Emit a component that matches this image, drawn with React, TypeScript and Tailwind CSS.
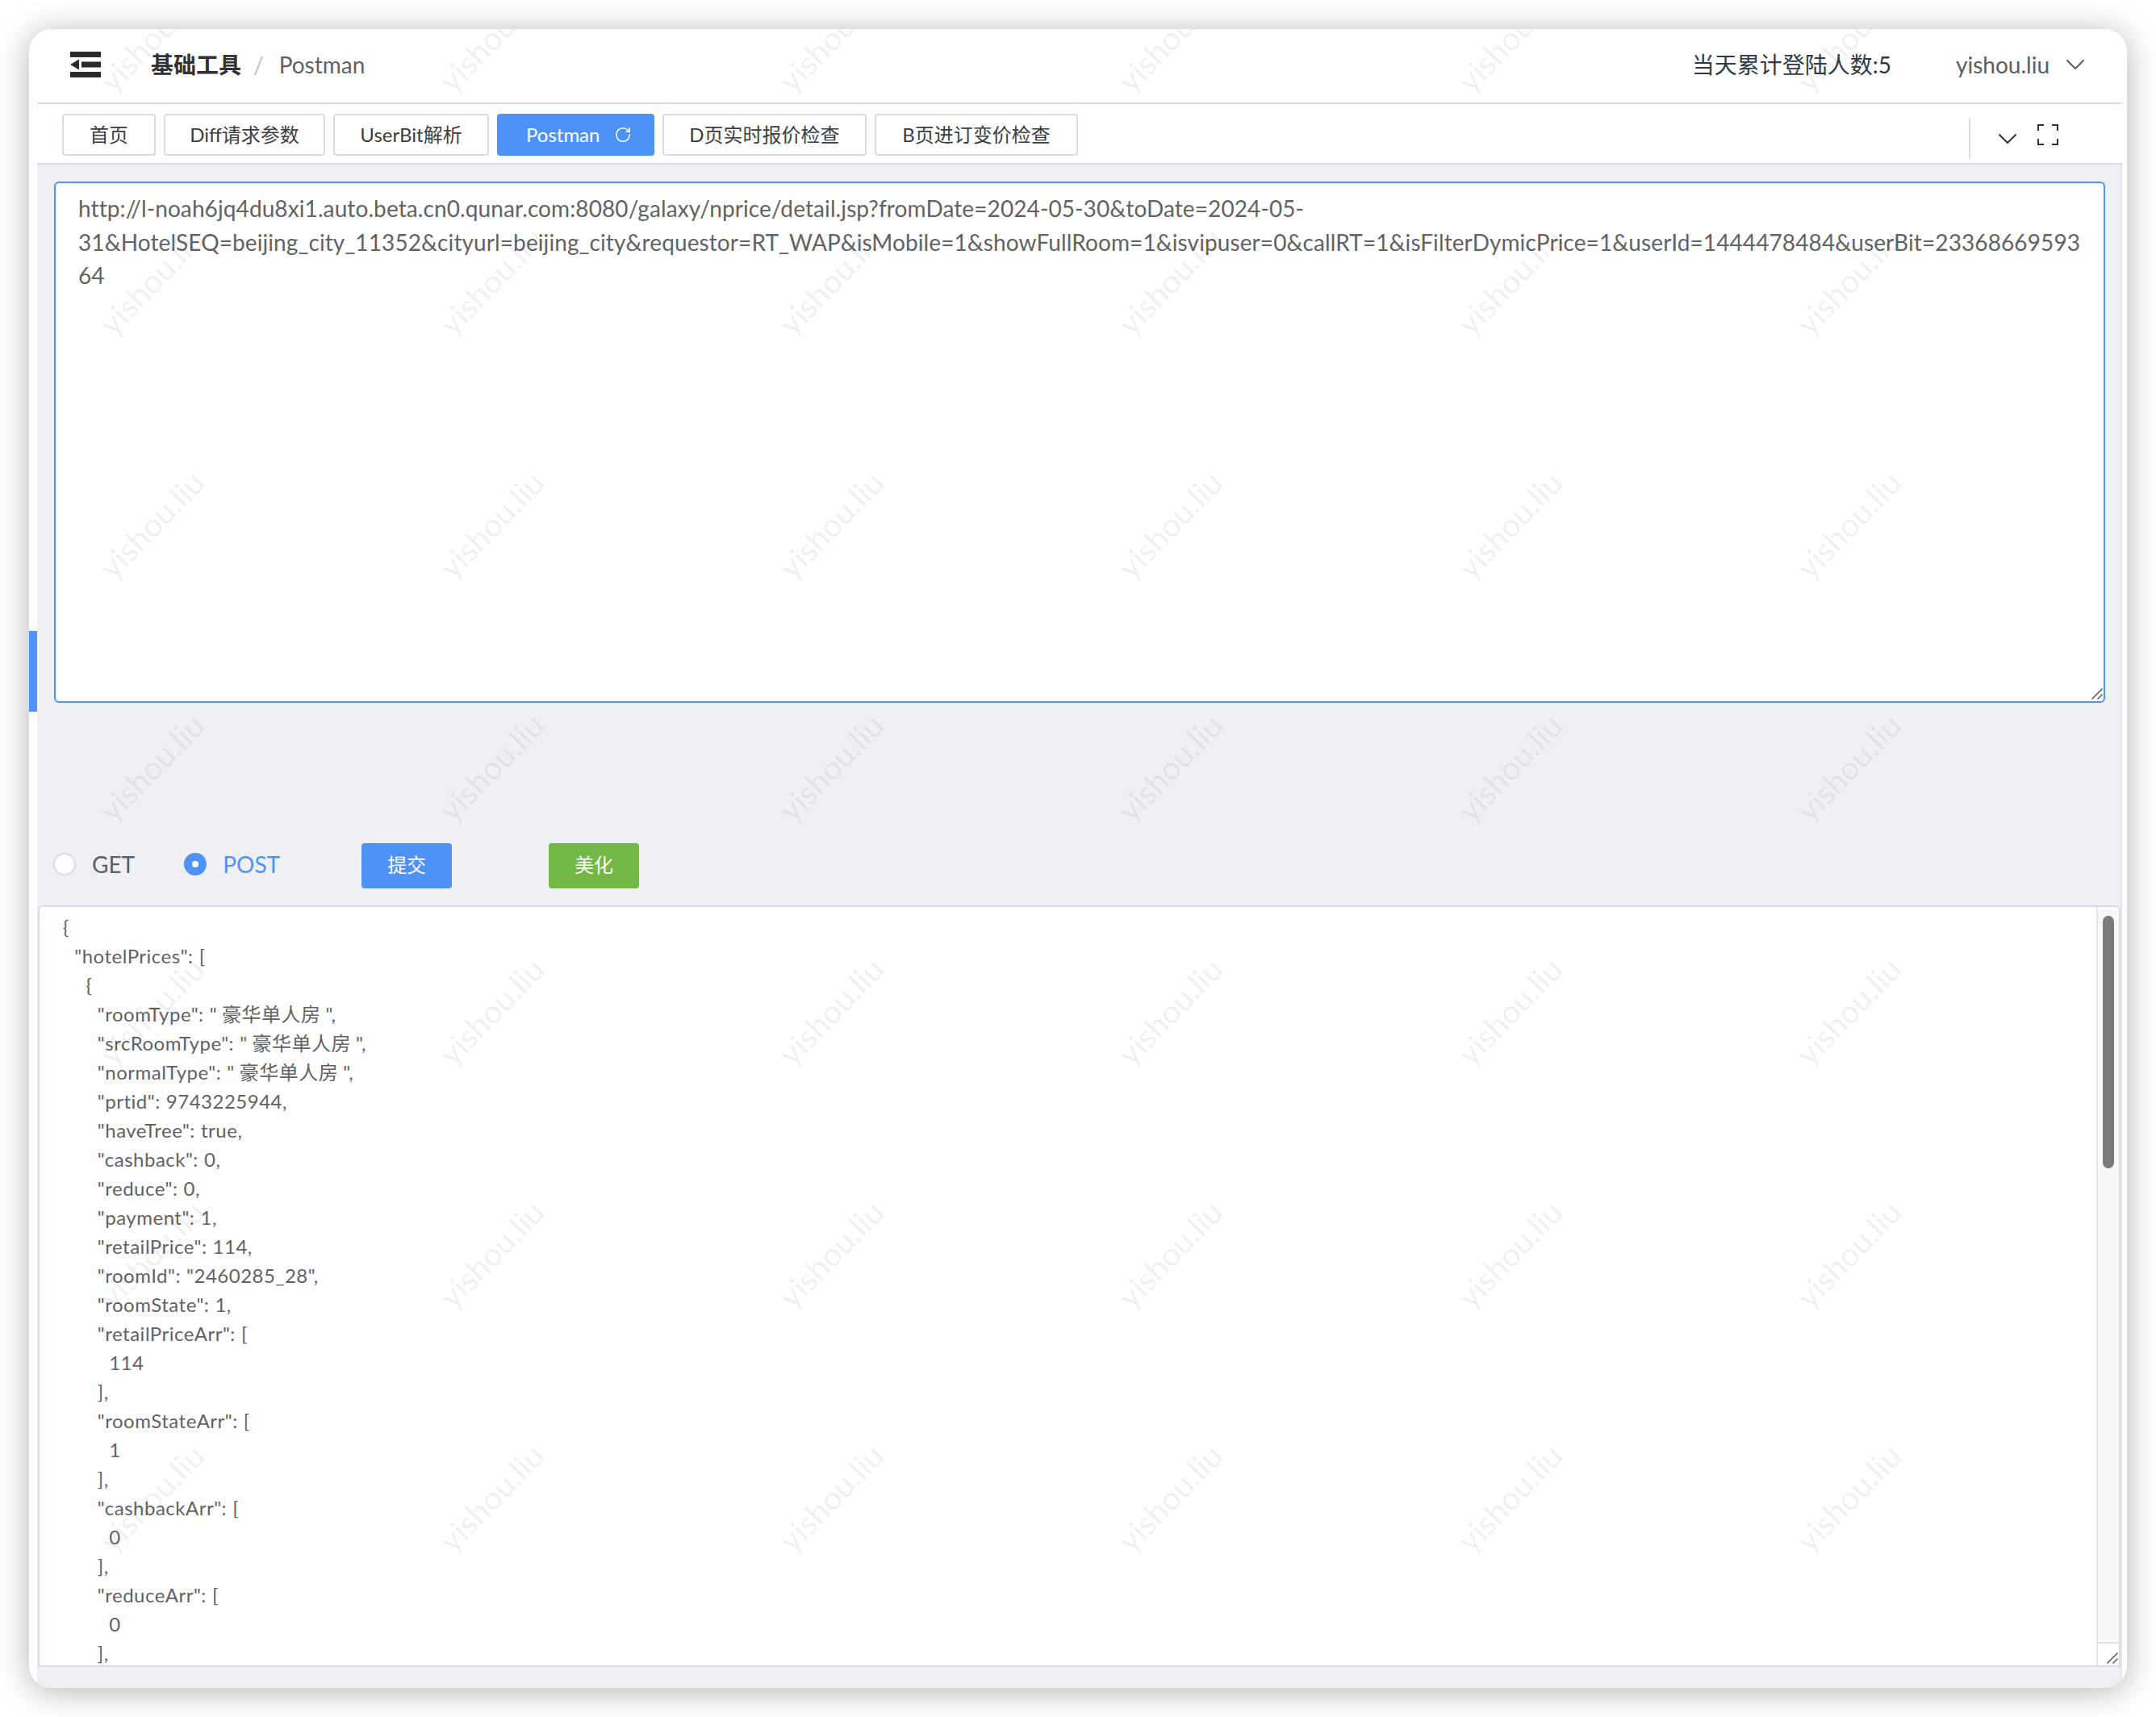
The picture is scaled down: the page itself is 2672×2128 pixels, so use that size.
import { Fragment } from 'react';
import { ChevronDown, RotateCw } from 'lucide-react';

const FONT = '[font-family:Lato,"Noto_Sans_CJK_SC",sans-serif]';
const ROOM = '豪华单人房';

const tabs = [
  { name: '首页', width: 'w-[116px]' },
  { name: 'Diff请求参数', width: 'w-[200px]' },
  { name: 'UserBit解析', width: 'w-[193px]' },
  { name: 'Postman', width: 'w-[195px]' },
  { name: 'D页实时报价检查', width: 'w-[253px]' },
  { name: 'B页进订变价检查', width: 'w-[252px]' },
];

const urlLines = [
  'http://l-noah6jq4du8xi1.auto.beta.cn0.qunar.com:8080/galaxy/nprice/detail.jsp?fromDate=2024-05-30&toDate=2024-05-',
  '31&HotelSEQ=beijing_city_11352&cityurl=beijing_city&requestor=RT_WAP&isMobile=1&showFullRoom=1&isvipuser=0&callRT=1&isFilterDymicPrice=1&userId=1444478484&userBit=23368669593',
  '64',
];

const jsonLines = [
  '{',
  '  "hotelPrices": [',
  '    {',
  '      "roomType": "豪华单人房",',
  '      "srcRoomType": "豪华单人房",',
  '      "normalType": "豪华单人房",',
  '      "prtid": 9743225944,',
  '      "haveTree": true,',
  '      "cashback": 0,',
  '      "reduce": 0,',
  '      "payment": 1,',
  '      "retailPrice": 114,',
  '      "roomId": "2460285_28",',
  '      "roomState": 1,',
  '      "retailPriceArr": [',
  '        114',
  '      ],',
  '      "roomStateArr": [',
  '        1',
  '      ],',
  '      "cashbackArr": [',
  '        0',
  '      ],',
  '      "reduceArr": [',
  '        0',
  '      ],',
];

function Grip() {
  return (
    <svg width="14" height="14" viewBox="0 0 14 14" className="absolute right-[1px] bottom-[2px]">
      <path d="M0.5 13.5 L13.5 0.5 M7.5 13.5 L13.5 7.5" stroke="#666" strokeWidth="1.6" fill="none" />
    </svg>
  );
}

export default function App() {
  return (
    <div className={`w-[2672px] h-[2128px] bg-white p-9 ${FONT}`}>
      <div className="relative w-[2600px] h-[2056px] rounded-[28px] overflow-hidden bg-white pl-[10px] pr-[6px] shadow-[0_4px_40px_rgba(0,0,0,0.3)]">
        {/* HEADER */}
        <header className="h-[93px] pb-[3px] flex items-center justify-between border-b-2 border-[#d8dce5] bg-white">
          <div className="flex items-center">
            <svg width="38" height="32" viewBox="0 0 38 32" className="ml-[41px]">
              <path d="M0 0H38V7H0ZM0 25H38V32H0ZM14 12.5H38V19.5H14ZM0 16 L11 9.5V22.5Z" fill="#2b2b2b" />
            </svg>
            <span className="ml-[62px] text-[28px] font-bold text-[#303133]">基础工具</span>
            <span className="ml-[15px] text-[28px] text-[#c0c4cc]">/</span>
            <span className="ml-[19px] text-[28px] text-[#606266]">Postman</span>
          </div>
          <div className="flex items-center">
            <span className="text-[28px] text-[#303a46]">当天累计登陆人数:5</span>
            <span className="ml-[80px] text-[28px] text-[#5a5e66]">yishou.liu</span>
            <ChevronDown size={40} strokeWidth={1.2} className="ml-[12px] mr-[38px] text-[#5a5e66]" />
          </div>
        </header>

        {/* TABS */}
        <div className="h-[75px] pt-[3px] flex items-center justify-between border-b-2 border-[#d8dce5] bg-white">
          <div className="flex items-center gap-[10px] pl-[31px]">
            {tabs.map((tab) =>
              tab.name === 'Postman' ? (
                <div
                  key={tab.name}
                  className={`${tab.width} h-[52px] pl-[36px] flex items-center gap-[18px] rounded-[4px] bg-[#4f92f7] text-white text-[24px]`}
                >
                  {tab.name}
                  <RotateCw size={22} strokeWidth={1.7} />
                </div>
              ) : (
                <div
                  key={tab.name}
                  className={`${tab.width} h-[52px] flex items-center justify-center rounded-[4px] border-2 border-[#d8dce5] bg-white text-[#3a3d42] text-[24px]`}
                >
                  {tab.name}
                </div>
              ),
            )}
          </div>
          <div className="flex items-center h-[50px] mt-[10px] border-l-2 border-[#d8dce5] mr-[79px]">
            <ChevronDown size={40} strokeWidth={1.2} className="ml-[26px] text-[#303133]" />
            <svg width="26" height="26" viewBox="0 0 26 26" className="ml-[17px] -mt-[10px]">
              <path d="M1 8V1H8M18 1H25V8M25 18V25H18M8 25H1V18" stroke="#303133" strokeWidth="2" fill="none" />
            </svg>
          </div>
        </div>

        {/* CONTENT */}
        <main className="h-[1888px] bg-[#eef0f4] border-r-2 border-[#e4e6ea]">
          <div className="pt-[21px] pl-[21px] pr-[19px]">
            <div className="relative h-[646px] rounded-[6px] border-2 border-[#4f92f7] bg-white px-[28px] py-[11px] text-[28px] tracking-[0.1px] leading-[41.6px] text-[#606266] whitespace-nowrap">
              {urlLines.map((line, i) => (
                <Fragment key={i}>
                  {line}
                  <br />
                </Fragment>
              ))}
              <Grip />
            </div>
          </div>

          <div className="mt-[174px] h-[56px] pl-[20px] flex items-center text-[28px]">
            <span className="-mt-[4px] w-[28px] h-[28px] rounded-full border-2 border-[#d8dce5] bg-white" />
            <span className="-mt-[4px] ml-[20px] text-[#5a5e66]">GET</span>
            <span className="-mt-[4px] ml-[61px] w-[28px] h-[28px] rounded-full bg-[#4f92f7] flex items-center justify-center">
              <span className="w-[8px] h-[8px] rounded-full bg-white" />
            </span>
            <span className="-mt-[4px] ml-[20px] text-[#4f92f7]">POST</span>
            <div className="ml-[101px] w-[112px] h-[56px] pb-[2px] rounded-[4px] bg-[#4f92f7] text-white text-[24px] flex items-center justify-center">
              提交
            </div>
            <div className="ml-[120px] w-[112px] h-[56px] pb-[2px] rounded-[4px] bg-[#72b845] text-white text-[24px] flex items-center justify-center">
              美化
            </div>
          </div>

          <div className="mt-[21px] ml-px h-[944px] flex rounded-t-[6px] border-2 border-[#d8dce5] bg-white overflow-hidden">
            <pre className={`flex-1 overflow-hidden pl-[29px] pt-[7px] text-[24px] tracking-[0.5px] leading-[36px] text-[#606266] [word-spacing:0.5px] ${FONT}`}>
              {jsonLines.map((line, i) => {
                const parts = line.split(ROOM);
                return (
                  <Fragment key={i}>
                    {parts[0]}
                    {parts.length > 1 && <span className="mx-[6px]">{ROOM}</span>}
                    {parts[1]}
                    {'\n'}
                  </Fragment>
                );
              })}
            </pre>
            <div className="w-[28px] flex flex-col border-l-2 border-[#e5e5e5] bg-[#f8f8f8]">
              <div className="flex-1 pt-[11px] pl-[6px]">
                <div className="w-[14px] h-[313px] rounded-full bg-[#7b7b7b]" />
              </div>
              <div className="relative h-[29px] border-t-2 border-[#e0e0e0] bg-white">
                <Grip />
              </div>
            </div>
          </div>
        </main>

        {/* WATERMARK */}
        <div className="absolute left-[-58px] top-[-140px] w-[2700px] pointer-events-none grid grid-cols-[repeat(7,420.6px)] auto-rows-[301.5px]">
          {Array.from({ length: 56 }).map((_, i) => (
            <div key={i} className="flex items-center justify-center">
              <span className="-rotate-[46deg] text-[40px] text-[rgba(0,0,0,0.06)]">yishou.liu</span>
            </div>
          ))}
        </div>

        {/* BLUE HANDLE */}
        <div className="absolute left-0 top-[746px] w-[10px] h-[100px] bg-[#4f92f7]" />
      </div>
    </div>
  );
}
